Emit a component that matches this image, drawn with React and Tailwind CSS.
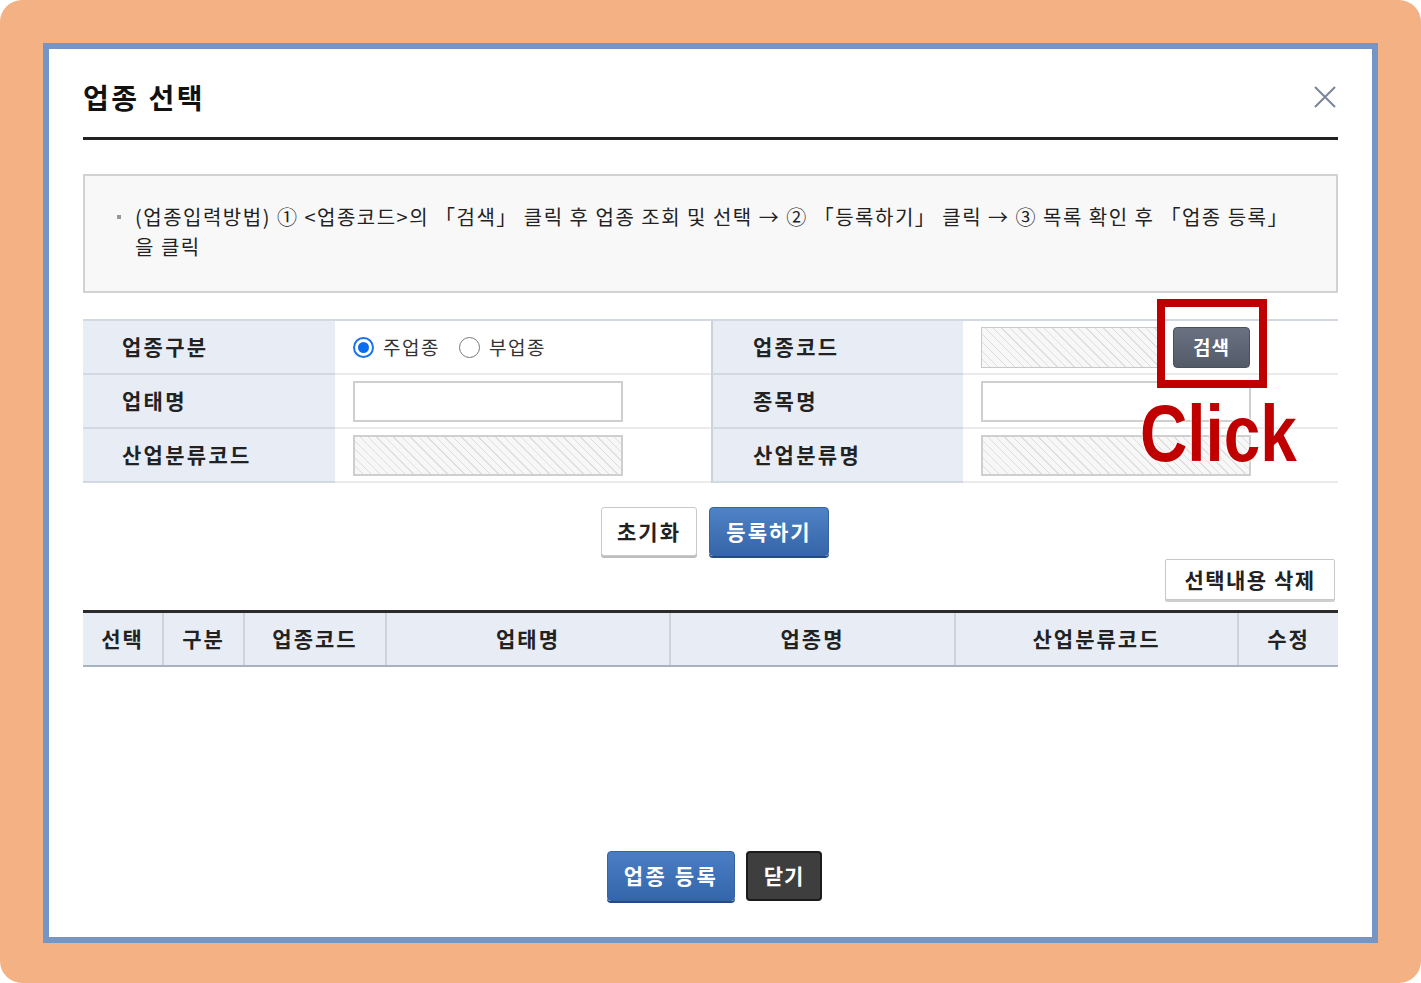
import React from "react";

const hatch =
  "bg-[repeating-linear-gradient(45deg,#f7f7f7_0px,#f7f7f7_5px,#dedede_5px,#dedede_6px)]";

function Radio({ checked, label }) {
  return (
    <label className="flex items-center gap-[9px]">
      {checked ? (
        <span className="flex h-[21px] w-[21px] items-center justify-center rounded-full border-2 border-[#1a73e8] bg-white">
          <span className="h-[11px] w-[11px] rounded-full bg-[#0b6cf0]" />
        </span>
      ) : (
        <span className="h-[21px] w-[21px] rounded-full border-[1.5px] border-[#777] bg-white" />
      )}
      <span className="text-[19px] tracking-[1.5px] text-[#333]">{label}</span>
    </label>
  );
}

function LabelCell({ children, divider }) {
  return (
    <div
      className={
        "flex h-[54px] items-center border-b-2 border-[#d3d9e2] bg-[#e8edf5] pl-[39px] text-[21px] font-bold tracking-[2.3px] text-[#222] " +
        (divider ? "border-l-2 border-l-[#cbd2dc] pl-[40px]" : "")
      }
    >
      {children}
    </div>
  );
}

function ValueCell({ children }) {
  return (
    <div className="flex h-[54px] items-center border-b-2 border-[#ebebeb] bg-white pl-[18px]">
      {children}
    </div>
  );
}

export default function App() {
  const cols = [
    ["선택", "w-[79px]"],
    ["구분", "w-[81px]"],
    ["업종코드", "w-[142px]"],
    ["업태명", "w-[284px]"],
    ["업종명", "w-[285px]"],
    ["산업분류코드", "w-[283px]"],
    ["수정", "flex-1"],
  ];

  return (
    <div className="relative h-[983px] w-[1421px] bg-white font-['Noto_Sans_CJK_KR','Noto_Sans',sans-serif]">
      <div className="h-full w-full rounded-[22px] bg-[#f4b183] px-[43px] pb-[40px] pt-[43px]">
        <div className="flex h-full flex-col border-[6px] border-[#7496c6] bg-white px-[34px]">
          {/* header */}
          <div className="flex items-center justify-between border-b-[3px] border-[#222] pb-[20px] pt-[28px]">
            <h1 className="text-[28px] font-bold leading-[40px] tracking-[2.5px] text-[#111]">
              업종 선택
            </h1>
            <svg width="24" height="24" viewBox="0 0 24 24" className="mr-[1px]">
              <path d="M2 2L22 22M22 2L2 22" stroke="#7a859b" strokeWidth="2" />
            </svg>
          </div>

          {/* guide */}
          <div className="mt-[34px] border-2 border-[#d2d2d2] bg-[#f8f8f8] pb-[29px] pl-[32px] pt-[26px] text-[20px] leading-[30px] tracking-[1.5px] text-[#222]">
            <div className="flex items-center whitespace-nowrap">
              <span className="mr-[14px] h-[4px] w-[4px] bg-[#999]" />
              <span>
                (업종입력방법) ① &lt;업종코드&gt;의 「검색」 클릭 후 업종 조회 및 선택 → ② 「등록하기」 클릭 → ③ 목록 확인 후 「업종 등록」
              </span>
            </div>
            <div className="pl-[18px]">을 클릭</div>
          </div>

          {/* form */}
          <div className="mt-[26px] grid grid-cols-[252px_376px_252px_1fr] border-t-2 border-[#d3d9e2]">
            <LabelCell>업종구분</LabelCell>
            <ValueCell>
              <div className="flex items-center gap-[19px]">
                <Radio checked label="주업종" />
                <Radio label="부업종" />
              </div>
            </ValueCell>
            <LabelCell divider>업종코드</LabelCell>
            <ValueCell>
              <div className={"h-[41px] w-[180px] border border-[#c8c8c8] " + hatch} />
              <button className="ml-[12px] h-[41px] w-[77px] rounded-[4px] border border-[#4a505c] bg-[linear-gradient(#6a7282,#535a68)] text-[19px] font-bold tracking-[1px] text-white">
                검색
              </button>
            </ValueCell>

            <LabelCell>업태명</LabelCell>
            <ValueCell>
              <div className="h-[41px] w-[270px] border-2 border-[#cfcfcf] bg-white" />
            </ValueCell>
            <LabelCell divider>종목명</LabelCell>
            <ValueCell>
              <div className="h-[41px] w-[270px] border-2 border-[#cfcfcf] bg-white" />
            </ValueCell>

            <LabelCell>산업분류코드</LabelCell>
            <ValueCell>
              <div className={"h-[41px] w-[270px] border-2 border-[#cfcfcf] " + hatch} />
            </ValueCell>
            <LabelCell divider>산업분류명</LabelCell>
            <ValueCell>
              <div className={"h-[41px] w-[270px] border-2 border-[#cfcfcf] " + hatch} />
            </ValueCell>
          </div>

          {/* action buttons */}
          <div className="mt-[24px] flex justify-center gap-[12px] pl-[9px]">
            <button className="h-[49px] w-[96px] rounded-[3px] border border-[#c9c9c9] bg-white text-[21px] font-bold tracking-[2px] text-[#222] shadow-[0_2px_0_#bdbdbd]">
              초기화
            </button>
            <button className="h-[49px] w-[120px] rounded-[4px] border border-[#3563a5] bg-[linear-gradient(#4f82c6,#3665a9)] text-[21px] font-bold tracking-[2px] text-white shadow-[0_2px_0_#234c86]">
              등록하기
            </button>
          </div>
          <div className="mt-[3px] flex justify-end pr-[3px]">
            <button className="h-[41px] w-[170px] rounded-[2px] border border-[#c9c9c9] bg-white text-[21px] font-bold tracking-[1.5px] text-[#222] shadow-[0_2px_0_#cfcfcf]">
              선택내용 삭제
            </button>
          </div>

          {/* list header */}
          <div className="mt-[10px] flex h-[57px] border-b-2 border-t-[3px] border-b-[#a9b2bf] border-t-[#2b2b2b] bg-[#e8edf5]">
            {cols.map(([name, w], i) => (
              <div
                key={name}
                className={
                  "flex items-center justify-center text-[21px] font-bold tracking-[2px] text-[#222] " +
                  w +
                  (i > 0 ? " border-l-2 border-[#cdd4de]" : "")
                }
              >
                {name}
              </div>
            ))}
          </div>

          <div className="flex-1" />

          {/* bottom buttons */}
          <div className="mb-[36px] flex justify-center gap-[11px] pl-[8px]">
            <button className="h-[50px] w-[128px] rounded-[4px] border border-[#3563a5] bg-[linear-gradient(#4a7ec4,#3466ab)] text-[21px] font-bold tracking-[2.5px] text-white shadow-[0_2px_0_#234c86]">
              업종 등록
            </button>
            <button className="h-[50px] w-[76px] rounded-[4px] border-2 border-[#1b1b1b] bg-[#3e3e3e] text-[21px] font-bold tracking-[1px] text-white">
              닫기
            </button>
          </div>
        </div>
      </div>

      {/* annotation overlay */}
      <div className="absolute left-[1157px] top-[299px] h-[89px] w-[110px] border-[8px] border-[#c00000]" />
      <div className="absolute left-[1140px] top-[394px] origin-left scale-x-[0.82] font-['Liberation_Sans',Arial,sans-serif] text-[80px] font-bold leading-none text-[#c00000] [text-shadow:0_0_3px_#fff,0_0_3px_#fff]">
        Click
      </div>
    </div>
  );
}
